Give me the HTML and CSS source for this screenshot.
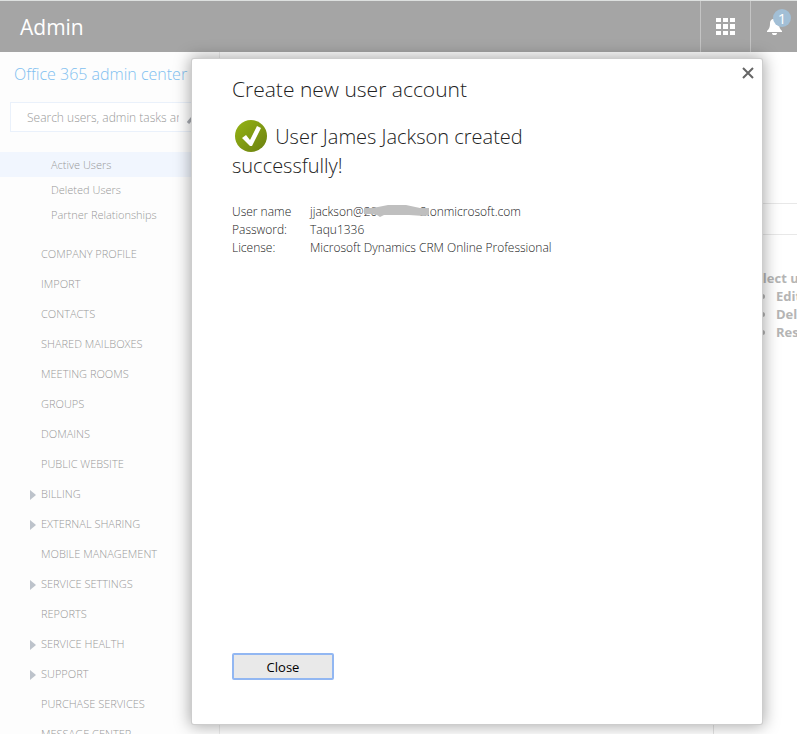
FILE: index.html
```html
<!DOCTYPE html>
<html lang="en">
<head>
  <meta charset="UTF-8">
  <title>Office 365 admin center</title>
  <link rel="stylesheet" href="styles.css">
</head>
<body>

  <header class="topbar">
    <h1 class="topbar-title">Admin</h1>
    <button class="topbar-button" type="button" aria-label="Apps">
      <svg width="19" height="17" viewBox="0 0 19 17" fill="#fff">
        <path d="M0 0h5v4H0zM7 0h5v4H7zM14 0h5v4h-5zM0 6h5v5H0zM7 6h5v5H7zM14 6h5v5h-5zM0 13h5v4H0zM7 13h5v4H7zM14 13h5v4h-5z"/>
      </svg>
    </button>
    <button class="topbar-button" type="button" aria-label="Notifications">
      <svg width="16" height="16" viewBox="0 0 16 16" fill="#fff">
        <path d="M8 0C11 0 12 2 13 5c0 3 1 5 3 7v1H1v-1c2-2 3-4 3-7 0-3 1-5 4-5zM6 14h5c0 3-5 3-5 0z"/>
      </svg>
      <span class="badge">1</span>
    </button>
  </header>

  <div class="page">
    <aside class="sidebar">
      <h2 class="sidebar-title"><a href="#">Office 365 admin center</a></h2>

      <div class="search">
        <input type="text" aria-label="Search" value="Search users, admin tasks and more">
        <svg width="14" height="14" viewBox="0 0 14 14" fill="none" stroke="#a9adb3">
          <path d="M1 13l5-6" stroke-width="3"/>
          <circle cx="9" cy="5" r="4" stroke-width="2"/>
        </svg>
      </div>

      <nav>
        <ul class="subnav">
          <li class="active"><a href="#">Active Users</a></li>
          <li><a href="#">Deleted Users</a></li>
          <li><a href="#">Partner Relationships</a></li>
        </ul>
        <ul class="nav">
          <li><a href="#">COMPANY PROFILE</a></li>
          <li><a href="#">IMPORT</a></li>
          <li><a href="#">CONTACTS</a></li>
          <li><a href="#">SHARED MAILBOXES</a></li>
          <li><a href="#">MEETING ROOMS</a></li>
          <li><a href="#">GROUPS</a></li>
          <li><a href="#">DOMAINS</a></li>
          <li><a href="#">PUBLIC WEBSITE</a></li>
          <li class="expand"><a href="#">BILLING</a></li>
          <li class="expand"><a href="#">EXTERNAL SHARING</a></li>
          <li><a href="#">MOBILE MANAGEMENT</a></li>
          <li class="expand"><a href="#">SERVICE SETTINGS</a></li>
          <li><a href="#">REPORTS</a></li>
          <li class="expand"><a href="#">SERVICE HEALTH</a></li>
          <li class="expand"><a href="#">SUPPORT</a></li>
          <li><a href="#">PURCHASE SERVICES</a></li>
          <li><a href="#">MESSAGE CENTER</a></li>
        </ul>
      </nav>
    </aside>

    <main class="content">
      <div class="toolbar"></div>
      <section class="details">
        <p>Select users</p>
        <ul>
          <li>Edit</li>
          <li>Delete</li>
          <li>Reset</li>
        </ul>
      </section>
    </main>
  </div>

  <div class="dialog" role="dialog" aria-labelledby="dialog-title">
    <button class="dialog-x" type="button" aria-label="Close dialog">
      <svg width="12" height="12" viewBox="0 0 12 12" stroke="#666" stroke-width="2">
        <path d="M1 1l10 10M11 1L1 11"/>
      </svg>
    </button>
    <h2 class="dialog-title" id="dialog-title">Create new user account</h2>
    <p class="result">
      <svg width="32" height="32" viewBox="0 0 32 32">
        <defs>
          <linearGradient id="green" x1="0" y1="0" x2="1" y2="1">
            <stop offset="0" stop-color="#95b414"/>
            <stop offset="1" stop-color="#6b8010"/>
          </linearGradient>
        </defs>
        <circle cx="16" cy="16" r="16" fill="url(#green)"/>
        <path d="M7 18l4-3 4 5 7-14 4 2-9 18h-2z" fill="#fff"/>
      </svg>
      User James Jackson created successfully!
    </p>
    <table class="account">
      <tr>
        <th scope="row">User name</th>
        <td>jjackson@<span class="hidden-part"><span>20</span><span>2.</span><svg width="66" height="12" viewBox="0 0 66 12"><path d="M0 3L7 3 14 2 24 0 42 0 56 3 65 3 65 10 60 11 45 10 32 10 20 10 16 12 13 10 8 9 0 9z" fill="#bfbfbf"/></svg></span>onmicrosoft.com</td>
      </tr>
      <tr>
        <th scope="row">Password:</th>
        <td>Taqu1336</td>
      </tr>
      <tr>
        <th scope="row">License:</th>
        <td>Microsoft Dynamics CRM Online Professional</td>
      </tr>
    </table>
    <button class="close" type="button">Close</button>
  </div>

</body>
</html>
```

FILE: styles.css
```css
* {
  padding: 0;
  margin: 0;
  box-sizing: border-box;
}

body {
  height: 100vh;
  display: flex;
  flex-direction: column;
  overflow: hidden;
  background: #fff;
  color: #222;
  font-family: "Open Sans", "Noto Sans", sans-serif;
  font-size: 11px;
  line-height: 18px;
}

ul {
  list-style: none;
}

a {
  color: inherit;
  text-decoration: none;
}

button {
  font-family: inherit;
  border: 0;
  background: none;
}

/* top bar */

.topbar {
  flex: none;
  display: flex;
  height: 52px;
  padding-left: 20px;
  border-top: 1px solid #dde0df;
  background: #a5a5a5;
  color: #fff;
}

.topbar-title {
  flex: 1;
  font-size: 21px;
  font-weight: 400;
  line-height: 52px;
}

.topbar-button {
  position: relative;
  width: 50px;
  display: flex;
  align-items: center;
  justify-content: center;
  border-left: 1px solid #c4c4c4;
}

.topbar-button:last-child {
  width: 47px;
}

.badge {
  position: absolute;
  top: 8px;
  right: 6px;
  width: 18px;
  height: 18px;
  border-radius: 50%;
  background: #a2bfd6;
  color: #fff;
  font-size: 15px;
  line-height: 18px;
}

/* left navigation */

.page {
  flex: 1;
  min-height: 0;
  display: flex;
}

.sidebar {
  width: 220px;
  flex: none;
  overflow: hidden;
  padding-top: 12px;
  border-right: 1px solid #ececec;
  background: #fdfdfd;
  color: #999;
}

.sidebar-title {
  padding-left: 14px;
  color: #7fc0f0;
  font-size: 16px;
  font-weight: 300;
  line-height: 20px;
}

.search {
  display: flex;
  align-items: center;
  gap: 8px;
  height: 30px;
  margin: 18px 10px 20px;
  padding-left: 16px;
  border: 1px solid #eaf1fb;
  background: #fff;
}

.search input {
  width: 152px;
  border: 0;
  outline: 0;
  background: none;
  color: #999;
  font-family: inherit;
  font-size: 12px;
  font-weight: 300;
}

.subnav li {
  padding-left: 51px;
  font-weight: 300;
  line-height: 25px;
}

.subnav .active {
  background: #f1f6fe;
}

.nav {
  margin-top: 12px;
}

.nav li {
  display: flex;
  align-items: center;
  padding-left: 41px;
  font-weight: 300;
  line-height: 30px;
}

.nav .expand {
  padding-left: 30px;
}

.nav .expand::before {
  content: "";
  margin: 2px 5px 0 0;
  border: 5px solid transparent;
  border-left: 6px solid #bdc3cb;
  border-right: 0;
}

/* right column */

.content {
  flex: 1;
  display: flex;
  flex-direction: column;
  align-items: flex-end;
}

.toolbar {
  width: 84px;
  height: 32px;
  margin-top: 151px;
  border: 1px solid #e8e8e8;
  border-right: 0;
}

.details {
  flex: 1;
  width: 84px;
  overflow: hidden;
  padding: 34px 0 0 34px;
  border-left: 1px solid #e4e4e4;
  color: #b5b5b5;
  font-size: 13px;
  font-weight: 700;
  white-space: nowrap;
}

.details ul {
  padding-left: 28px;
  list-style: disc;
}

/* dialog */

.dialog {
  position: absolute;
  top: 59px;
  right: 35px;
  bottom: 10px;
  left: 192px;
  display: flex;
  flex-direction: column;
  align-items: flex-start;
  padding: 15px 40px 44px;
  border-radius: 2px;
  background: #fff;
  box-shadow: 0 0 0 1px #cdcdcd, 0 0 16px 2px rgba(0, 0, 0, .35);
}

.dialog-x {
  position: absolute;
  top: 8px;
  right: 8px;
  width: 12px;
  height: 12px;
}

.dialog-x svg {
  display: block;
}

.dialog-title {
  font-size: 21px;
  font-weight: 300;
  line-height: 30px;
}

.result {
  width: 320px;
  margin-top: 16px;
  font-size: 20px;
  font-weight: 300;
  line-height: 28px;
}

.result svg {
  margin: 0 3px;
  vertical-align: -8px;
}

.account {
  margin-top: 23px;
  border-collapse: collapse;
  font-size: 12px;
  font-weight: 300;
}

.account th {
  width: 78px;
  font-weight: 300;
  text-align: left;
}

.hidden-part {
  position: relative;
  display: inline-flex;
  justify-content: space-between;
  width: 66px;
}

.hidden-part svg {
  position: absolute;
  top: 2px;
  left: 0;
}

.close {
  width: 102px;
  height: 27px;
  margin-top: auto;
  border: 2px solid #92b7f2;
  border-radius: 2px;
  background: #e9e9e9;
  color: #000;
  font-size: 13px;
}
```
